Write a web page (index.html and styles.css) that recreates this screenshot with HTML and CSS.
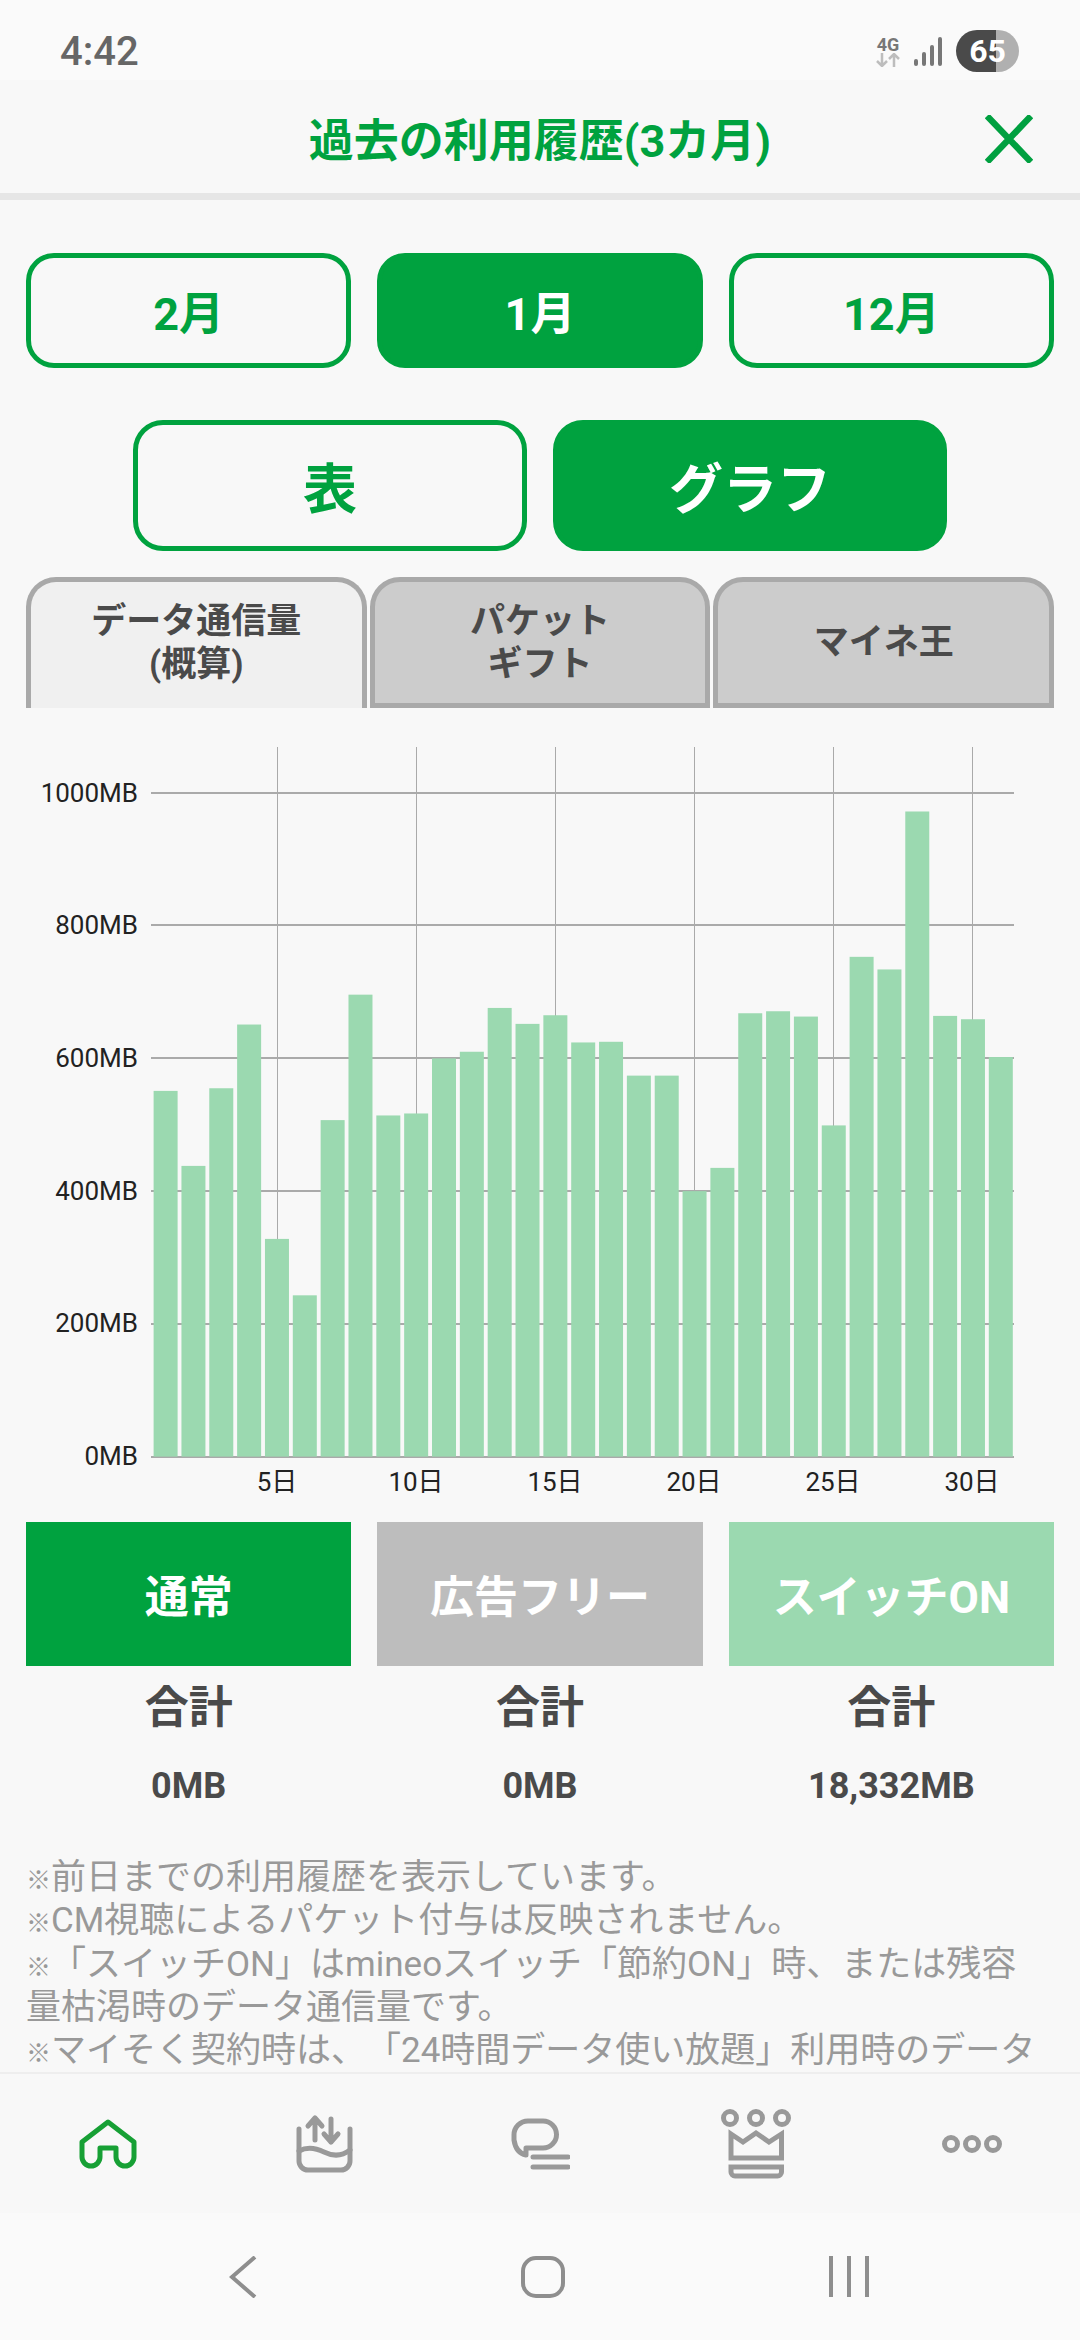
FILE: index.html
```html
<!DOCTYPE html>
<html lang="ja">
<head>
  <meta charset="UTF-8">
  <meta name="viewport" content="width=device-width, initial-scale=1" />
  <title>過去の利用履歴</title>
  <link rel="stylesheet" href="styles.css">
</head>
<body>
  <div class="status-bar">
    <span class="time">4:42</span>
    <div class="status-icons">
      <div class="net">
        <span class="net-label">4G</span>
        <svg width="24" height="14" viewBox="0 0 24 14" fill="none" stroke="#bdbdbd" stroke-width="2.5">
          <path d="M6 0V13M1 8l5 5 5-5M18 14V1M13 6l5-5 5 5"/>
        </svg>
      </div>
      <svg class="signal" width="28" height="29" viewBox="0 0 28 29" fill="#777">
        <rect x="0" y="22" width="4" height="7" rx="2"/>
        <rect x="8" y="15" width="4" height="14" rx="2"/>
        <rect x="16" y="8" width="4" height="21" rx="2"/>
        <rect x="24" y="0" width="4" height="29" rx="2"/>
      </svg>
      <div class="battery">65</div>
    </div>
  </div>

  <header class="top-bar">
    <h1>過去の利用履歴(3カ月)</h1>
    <svg class="close" width="48" height="48" viewBox="0 0 48 48" stroke="#00a040" stroke-width="6.5">
      <path d="M2 1L46 47M46 1L2 47"/>
    </svg>
  </header>

  <main class="content">
    <div class="months">
      <div class="btn month">2月</div>
      <div class="btn month on">1月</div>
      <div class="btn month">12月</div>
    </div>

    <div class="modes">
      <div class="btn mode">表</div>
      <div class="btn mode on">グラフ</div>
    </div>

    <div class="tabs">
      <div class="tab active">データ通信量<br>(概算)</div>
      <div class="tab">パケット<br>ギフト</div>
      <div class="tab">マイネ王</div>
    </div>

    <svg class="chart" width="1028" height="770" viewBox="26 730 1028 770">
      <g class="grid-v">
        <line x1="277.5" y1="747" x2="277.5" y2="1457"/>
        <line x1="416.5" y1="747" x2="416.5" y2="1457"/>
        <line x1="555.5" y1="747" x2="555.5" y2="1457"/>
        <line x1="694.5" y1="747" x2="694.5" y2="1457"/>
        <line x1="833.5" y1="747" x2="833.5" y2="1457"/>
        <line x1="972.5" y1="747" x2="972.5" y2="1457"/>
      </g>
      <g class="grid-h">
        <line x1="151" y1="793" x2="1014" y2="793"/>
        <line x1="151" y1="925" x2="1014" y2="925"/>
        <line x1="151" y1="1058" x2="1014" y2="1058"/>
        <line x1="151" y1="1191" x2="1014" y2="1191"/>
        <line x1="151" y1="1324" x2="1014" y2="1324"/>
        <line x1="151" y1="1457" x2="1014" y2="1457"/>
      </g>
      <!-- height = MB -->
      <g class="bars" transform="translate(153.6 1456.6) scale(1 -0.6637)">
        <rect x="0" width="24" height="551"/>
        <rect x="27.84" width="24" height="438"/>
        <rect x="55.68" width="24" height="555"/>
        <rect x="83.52" width="24" height="651"/>
        <rect x="111.36" width="24" height="328"/>
        <rect x="139.2" width="24" height="243"/>
        <rect x="167.04" width="24" height="507"/>
        <rect x="194.88" width="24" height="696"/>
        <rect x="222.72" width="24" height="514"/>
        <rect x="250.56" width="24" height="517"/>
        <rect x="278.4" width="24" height="600"/>
        <rect x="306.24" width="24" height="610"/>
        <rect x="334.08" width="24" height="676"/>
        <rect x="361.92" width="24" height="652"/>
        <rect x="389.76" width="24" height="665"/>
        <rect x="417.6" width="24" height="624"/>
        <rect x="445.44" width="24" height="625"/>
        <rect x="473.28" width="24" height="574"/>
        <rect x="501.12" width="24" height="574"/>
        <rect x="528.96" width="24" height="400"/>
        <rect x="556.8" width="24" height="435"/>
        <rect x="584.64" width="24" height="668"/>
        <rect x="612.48" width="24" height="671"/>
        <rect x="640.32" width="24" height="663"/>
        <rect x="668.16" width="24" height="499"/>
        <rect x="696" width="24" height="753"/>
        <rect x="723.84" width="24" height="734"/>
        <rect x="751.68" width="24" height="972"/>
        <rect x="779.52" width="24" height="664"/>
        <rect x="807.36" width="24" height="659"/>
        <rect x="835.2" width="24" height="602"/>
      </g>
      <g class="y-labels">
        <text x="138" y="802">1000MB</text>
        <text x="138" y="934">800MB</text>
        <text x="138" y="1067">600MB</text>
        <text x="138" y="1200">400MB</text>
        <text x="138" y="1332">200MB</text>
        <text x="138" y="1465">0MB</text>
      </g>
      <g class="x-labels">
        <text x="277" y="1491">5日</text>
        <text x="416" y="1491">10日</text>
        <text x="555" y="1491">15日</text>
        <text x="694" y="1491">20日</text>
        <text x="833" y="1491">25日</text>
        <text x="972" y="1491">30日</text>
      </g>
    </svg>

    <div class="legend">
      <div class="legend-col">
        <div class="legend-box normal">通常</div>
        <div class="sum-label">合計</div>
        <div class="sum-value">0MB</div>
      </div>
      <div class="legend-col">
        <div class="legend-box adfree">広告フリー</div>
        <div class="sum-label">合計</div>
        <div class="sum-value">0MB</div>
      </div>
      <div class="legend-col">
        <div class="legend-box switch">スイッチON</div>
        <div class="sum-label">合計</div>
        <div class="sum-value">18,332MB</div>
      </div>
    </div>

    <div class="notes">
      <p><span class="mark">※</span>前日までの利用履歴を表示しています。</p>
      <p><span class="mark">※</span>CM視聴によるパケット付与は反映されません。</p>
      <p><span class="mark">※</span>「スイッチON」はmineoスイッチ「節約ON」時、または残容<br>量枯渇時のデータ通信量です。</p>
      <p><span class="mark">※</span>マイそく契約時は、「24時間データ使い放題」利用時のデータ通信量です。</p>
    </div>
  </main>

  <nav class="bottom-nav">
    <svg width="58" height="50" viewBox="0 0 58 50" fill="none" stroke="#17a035" stroke-width="5" stroke-linejoin="round">
      <path d="M29 3L55 23V38A9 9 0 0 1 37 38V29H21V38A9 9 0 0 1 3 38V23Z"/>
    </svg>
    <svg width="57" height="59" viewBox="0 0 57 59" fill="none" stroke="#999" stroke-width="5" stroke-linecap="round" stroke-linejoin="round">
      <path d="M3 15V47a9 9 0 0 0 9 9H45a9 9 0 0 0 9-9V15"/>
      <path d="M3 37C12 32 20 34 28 38S45 43 54 36"/>
      <path d="M19 26V4M12 12L19 4L26 12"/>
      <path d="M35 5V28M28 20L35 28L42 20"/>
    </svg>
    <svg width="59" height="52" viewBox="0 0 59 52" fill="none" stroke="#999" stroke-width="5" stroke-linecap="round" stroke-linejoin="round">
      <path d="M17 3H32A13.500 13.500 0 0 1 32 30H15V37Q5 35 3 22V17A14 14 0 0 1 17 3Z"/>
      <path d="M22 39H57M22 49H57"/>
    </svg>
    <svg width="70" height="70" viewBox="0 0 70 70" fill="none" stroke="#999" stroke-width="5">
      <circle cx="9" cy="9" r="6.500"/>
      <circle cx="35" cy="9" r="6.500"/>
      <circle cx="61" cy="9" r="6.500"/>
      <path d="M10 25L22 33L35 24L48 33L60.500 25V49H10Z"/>
      <path d="M10 58H60.500V63a4 4 0 0 1-4 4H14a4 4 0 0 1-4-4Z"/>
    </svg>
    <svg width="60" height="18" viewBox="0 0 60 18" fill="none" stroke="#999" stroke-width="5">
      <circle cx="9" cy="9" r="6.500"/>
      <circle cx="30" cy="9" r="6.500"/>
      <circle cx="51" cy="9" r="6.500"/>
    </svg>
  </nav>

  <div class="system-nav">
    <svg width="28" height="42" viewBox="0 0 28 42" fill="none" stroke="#8e8e8e" stroke-width="4">
      <path d="M26 1L3 21L26 41"/>
    </svg>
    <svg width="44" height="42" viewBox="0 0 44 42" fill="none" stroke="#8e8e8e" stroke-width="4">
      <rect x="2" y="2" width="40" height="38" rx="13"/>
    </svg>
    <svg width="40" height="41" viewBox="0 0 40 41" fill="none" stroke="#8e8e8e" stroke-width="4">
      <path d="M2 0V41M20 0V41M38 0V41"/>
    </svg>
  </div>
</body>
</html>
```

FILE: styles.css
```css
:root {
  --green: #00a23f;
  --light-green: #9bd9b0;
  --text-dark: #4a4a4a;
  --bg: #f8f8f8;
}

* {
  box-sizing: border-box;
}

body {
  width: 1080px;
  height: 2340px;
  margin: 0;
  display: flex;
  flex-direction: column;
  overflow: hidden;
  background: var(--bg);
  color: var(--text-dark);
  font-family: Roboto, "Noto Sans CJK JP", sans-serif;
  text-spacing-trim: space-all;
}

/* status bar */
.status-bar {
  height: 80px;
  flex: none;
  display: flex;
  align-items: center;
  justify-content: space-between;
  padding: 22px 61px 0 60px;
  background: #fafafa;
}

.time {
  font-size: 40px;
  font-weight: 500;
  color: #666;
}

.status-icons {
  display: flex;
  align-items: center;
  gap: 14px;
}

.net {
  display: flex;
  flex-direction: column;
  align-items: center;
}

.net-label {
  font-size: 18px;
  font-weight: 700;
  line-height: 17px;
  color: #777;
}

.battery {
  width: 63px;
  height: 42px;
  border-radius: 21px;
  background: linear-gradient(to right, #4a4a4a 63%, #b0b0b0 63%);
  color: white;
  font-size: 32px;
  font-weight: 700;
  line-height: 42px;
  text-align: center;
}

/* header */
.top-bar {
  height: 120px;
  flex: none;
  position: relative;
  display: flex;
  align-items: center;
  justify-content: center;
  padding-top: 9px;
  background: var(--bg);
  border-bottom: 7px solid #e6e6e6;
}

h1 {
  margin: 0;
  color: var(--green);
  font-size: 45px;
  font-weight: 700;
  line-height: 1;
}

.close {
  position: absolute;
  top: 35px;
  right: 47px;
}

/* main */
.content {
  flex: 1;
  min-height: 0;
  overflow: hidden;
  padding: 53px 26px 0;
}

.months {
  display: flex;
  gap: 26px;
}

.modes {
  display: flex;
  justify-content: center;
  gap: 26px;
  margin-top: 52px;
}

.btn {
  display: flex;
  align-items: center;
  justify-content: center;
  border: 5px solid var(--green);
  color: var(--green);
  font-weight: 700;
}

.btn.on {
  background: var(--green);
  color: white;
}

.month {
  flex: 1;
  height: 115px;
  border-radius: 28px;
  font-size: 45px;
}

.mode {
  width: 394px;
  height: 131px;
  border-radius: 30px;
  font-size: 54px;
}

.tabs {
  display: flex;
  gap: 3px;
  margin-top: 26px;
}

.tab {
  flex: 1;
  height: 131px;
  display: flex;
  align-items: center;
  justify-content: center;
  text-align: center;
  border: 5px solid #a9a9a9;
  border-radius: 30px 30px 0 0;
  background: #ccc;
  font-size: 35px;
  font-weight: 700;
  line-height: 43px;
}

.tab.active {
  border-bottom: none;
  background: #f0f0f0;
  padding-bottom: 5px;
}

/* chart */
.chart {
  display: block;
  margin-top: 22px;
}

.grid-v line {
  stroke: #aaa;
  stroke-width: 1;
}

.grid-h line {
  stroke: #aaa;
  stroke-width: 2;
}

.bars rect {
  fill: var(--light-green);
}

.y-labels text, .x-labels text {
  fill: #222;
  font-size: 26px;
}

.y-labels text {
  text-anchor: end;
}

.x-labels text {
  text-anchor: middle;
}

/* legend */
.legend {
  display: flex;
  gap: 26px;
  margin-top: 22px;
}

.legend-col {
  flex: 1;
  text-align: center;
}

.legend-box {
  height: 144px;
  display: flex;
  align-items: center;
  justify-content: center;
  color: white;
  font-size: 44px;
  font-weight: 700;
}

.normal {
  background: var(--green);
}

.adfree {
  background: #bdbdbd;
}

.switch {
  background: var(--light-green);
}

.sum-label {
  margin-top: 12px;
  font-size: 44px;
  font-weight: 700;
  line-height: 60px;
}

.sum-value {
  margin-top: 28px;
  font-size: 36px;
  font-weight: 700;
  line-height: 40px;
}

.notes {
  margin-top: 50px;
  color: #999;
  font-size: 35px;
  line-height: 43.300px;
}

.notes p {
  margin: 0;
}

.mark {
  font-size: 25px;
  line-height: 1;
}

/* bottom navigation */
.bottom-nav {
  height: 141px;
  flex: none;
  display: grid;
  grid-template-columns: repeat(5, 216px);
  align-items: center;
  justify-items: center;
  border-top: 2px solid #eee;
  background: var(--bg);
}

.system-nav {
  height: 127px;
  flex: none;
  display: flex;
  align-items: center;
  justify-content: center;
  gap: 264px;
  padding-left: 18px;
  background: #fafafa;
}
```
